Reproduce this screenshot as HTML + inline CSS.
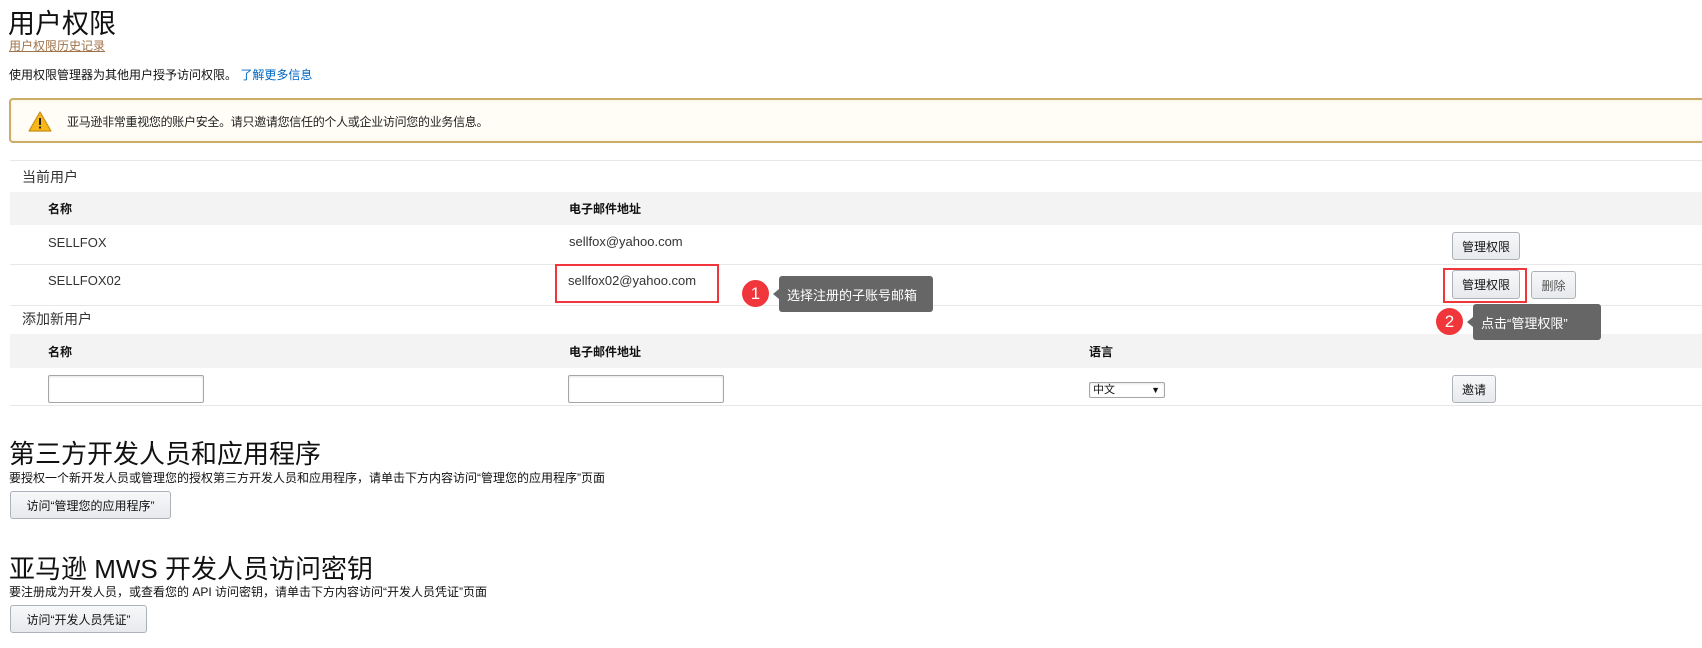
<!DOCTYPE html>
<html><head><meta charset="utf-8"><style>
*{margin:0;padding:0;box-sizing:border-box}
body{width:1702px;height:648px;position:relative;background:#fff;font-family:"Liberation Sans","Noto Sans CJK SC",sans-serif;color:#111;overflow:hidden}
.a{position:absolute;white-space:nowrap}
.btn{position:absolute;border:1px solid #adb1b8;border-radius:3px;background:linear-gradient(#f7f8fa,#e7e9ec);font-size:12px;color:#111;display:flex;align-items:center;justify-content:center}
.line{position:absolute;left:10px;right:0;height:1px;background:#e7e7e7}
.band{position:absolute;left:10px;right:0;background:#f3f3f3}
.th{position:absolute;font-size:12px;font-weight:bold}
.td{position:absolute;font-size:13px;color:#333}
.inp{position:absolute;border:1px solid #a6a6a6;border-radius:2px;background:#fff;box-shadow:inset 0 1px 2px rgba(0,0,0,.1)}
.circ{position:absolute;width:27px;height:27px;border-radius:50%;background:#f0363a;color:#fff;font-size:17px;display:flex;align-items:center;justify-content:center;z-index:5}
.tip{position:absolute;background:#666;color:#fff;font-size:13px;border-radius:3px;display:flex;align-items:center;padding-left:8px;z-index:5}
.tip:before{content:"";position:absolute;left:-6px;top:50%;margin-top:-5px;border:5px solid transparent;border-right:6px solid #666;border-left:0}
.red{position:absolute;border:2px solid #f0363a;z-index:4}
</style></head><body>
<div class="a" style="left:8px;top:2px;font-size:27px;color:#111">用户权限</div>
<div class="a" style="left:9px;top:37px;font-size:12px;color:#a0724a;text-decoration:underline">用户权限历史记录</div>
<div class="a" style="left:9px;top:66px;font-size:12px">使用权限管理器为其他用户授予访问权限。 <span style="color:#0066c0">了解更多信息</span></div>
<div style="position:absolute;left:9px;top:98px;right:-4px;height:45px;border:2px solid #c9ad68;border-radius:4px;background:#fffdf6;box-shadow:inset 0 0 3px #f7efcf"></div>
<svg class="a" style="left:28px;top:111px" width="24" height="21" viewBox="0 0 24 21"><path d="M12 1 L23 20 L1 20 Z" fill="#f7b816" stroke="#c8901a" stroke-width="1.2" stroke-linejoin="round"/><rect x="11" y="7" width="2" height="7" fill="#222"/><rect x="11" y="15.5" width="2" height="2" fill="#222"/></svg>
<div class="a" style="left:67px;top:113px;font-size:12px;color:#222;letter-spacing:-0.3px">亚马逊非常重视您的账户安全。请只邀请您信任的个人或企业访问您的业务信息。</div>

<div class="line" style="top:160px"></div>
<div class="a" style="left:22px;top:167px;font-size:14px;color:#333">当前用户</div>
<div class="band" style="top:192px;height:33px"></div>
<div class="th" style="left:48px;top:200px">名称</div>
<div class="th" style="left:569px;top:200px">电子邮件地址</div>
<div class="line" style="top:264px"></div>
<div class="td" style="left:48px;top:235px">SELLFOX</div>
<div class="td" style="left:569px;top:234px">sellfox@yahoo.com</div>
<div class="btn" style="left:1452px;top:232px;width:68px;height:28px">管理权限</div>
<div class="td" style="left:48px;top:273px">SELLFOX02</div>
<div class="td" style="left:568px;top:273px">sellfox02@yahoo.com</div>
<div class="btn" style="left:1452px;top:270px;width:68px;height:29px">管理权限</div>
<div class="btn" style="left:1531px;top:271px;width:45px;height:28px;color:#555">删除</div>
<div class="line" style="top:305px"></div>
<div class="a" style="left:22px;top:309px;font-size:14px;color:#333">添加新用户</div>
<div class="band" style="top:334px;height:34px"></div>
<div class="th" style="left:48px;top:343px">名称</div>
<div class="th" style="left:569px;top:343px">电子邮件地址</div>
<div class="th" style="left:1089px;top:343px">语言</div>
<div class="inp" style="left:48px;top:375px;width:156px;height:28px"></div>
<div class="inp" style="left:568px;top:375px;width:156px;height:28px"></div>
<div class="inp" style="left:1089px;top:382px;width:76px;height:16px;font-size:11px;padding-left:3px;line-height:14px">中文<span style="position:absolute;right:4px;top:0;font-size:9px">&#9660;</span></div>
<div class="btn" style="left:1452px;top:375px;width:44px;height:28px">邀请</div>
<div class="line" style="top:405px"></div>

<div class="a" style="left:9px;top:434px;font-size:26px;color:#111">第三方开发人员和应用程序</div>
<div class="a" style="left:9px;top:469px;font-size:12px">要授权一个新开发人员或管理您的授权第三方开发人员和应用程序，请单击下方内容访问“管理您的应用程序”页面</div>
<div class="btn" style="left:10px;top:491px;width:161px;height:28px">访问“管理您的应用程序”</div>
<div class="a" style="left:9px;top:549px;font-size:26px;color:#111">亚马逊 MWS 开发人员访问密钥</div>
<div class="a" style="left:9px;top:583px;font-size:12px">要注册成为开发人员，或查看您的 API 访问密钥，请单击下方内容访问“开发人员凭证”页面</div>
<div class="btn" style="left:10px;top:605px;width:137px;height:28px">访问“开发人员凭证”</div>

<div class="red" style="left:555px;top:264px;width:164px;height:39px"></div>
<div class="red" style="left:1443px;top:268px;width:84px;height:35px"></div>
<div class="circ" style="left:742px;top:280px">1</div>
<div class="tip" style="left:779px;top:276px;width:154px;height:36px">选择注册的子账号邮箱</div>
<div class="circ" style="left:1436px;top:308px">2</div>
<div class="tip" style="left:1473px;top:304px;width:128px;height:36px">点击“管理权限”</div>
</body></html>
